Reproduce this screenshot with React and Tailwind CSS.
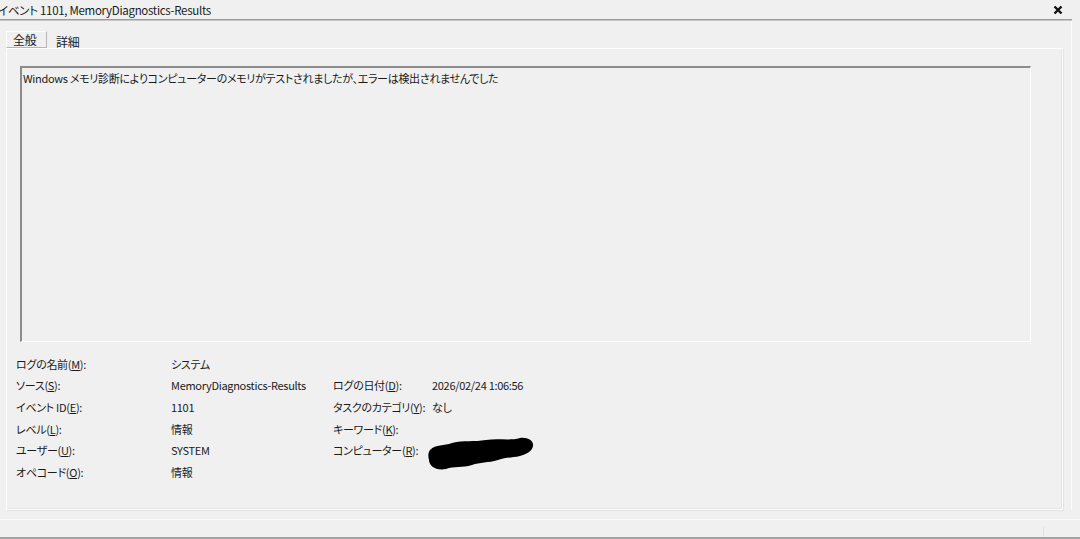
import React from 'react'

const FONT = "font-['Noto_Sans_CJK_JP','Noto_Sans',sans-serif] [font-feature-settings:'palt']"

// label with underlined access key
function Key({ pre, k, post = '):' }) {
  return (
    <span>
      {pre}(<span className="underline">{k}</span>{post}
    </span>
  )
}

function Redacted() {
  return (
    <svg width="106" height="32" viewBox="0 0 106 32" className="-my-[5px] -ml-[4px] mt-[3px] overflow-visible">
      <path
        d="M2 12 C8 6 16 8 24 5 C36 2 46 4 58 2 C70 0 82 3 92 0 C100 -1 106 3 105 8 C104 14 98 16 92 18 C84 20 78 19 70 22 C60 25 52 24 44 27 C34 30 26 28 18 31 C8 33 1 28 1 22 C0 18 0 15 2 12 Z"
        fill="#000"
      />
    </svg>
  )
}

const rows = [
  [<Key pre="ログの名前" k="M" />, 'システム', null, null],
  [<Key pre="ソース" k="S" />, 'MemoryDiagnostics-Results', <Key pre="ログの日付" k="D" />, '2026/02/24 1:06:56'],
  [<Key pre="イベント ID" k="E" />, '1101', <Key pre="タスクのカテゴリ" k="Y" />, 'なし'],
  [<Key pre="レベル" k="L" />, '情報', <Key pre="キーワード" k="K" />, null],
  [<Key pre="ユーザー" k="U" />, 'SYSTEM', <Key pre="コンピューター" k="R" />, <Redacted />],
  [<Key pre="オペコード" k="O" />, '情報', null, null],
]

export default function App() {
  return (
    <div className={`w-[1080px] h-[539px] bg-[#f0f0f0] text-[#1a1a1a] text-[11px] leading-[16px] tracking-[-0.3px] overflow-hidden flex flex-col ${FONT}`}>
      {/* Title */}
      <div className="h-[19px] flex items-center justify-between pr-[17px]">
        <span className="-ml-[2px] text-[11.5px] whitespace-nowrap">イベント 1101, MemoryDiagnostics-Results</span>
        <svg width="10" height="10" viewBox="0 0 10 10">
          <path d="M1.5 1.5 L8.5 8.5 M8.5 1.5 L1.5 8.5" stroke="#111" strokeWidth="2.4" />
        </svg>
      </div>
      <div className="h-[2px] mr-[8px] bg-[#9c9c9c] border-b border-[#c8c8c8]" />

      <div className="w-[1072px] border-r border-[#fbfbfb] flex flex-col">
        {/* Tabs */}
        <div className="mt-[10px] h-[17px] flex items-end">
          <div className="ml-[6px] w-[41px] h-[17px] border border-[#b5b5b5] border-t-[#fdfdfd] border-l-[#fdfdfd] flex items-center pl-[6px] text-[12px]">
            全般
          </div>
          <div className="ml-[9px] h-[15px] flex items-center translate-y-[1px] text-[12px]">詳細</div>
        </div>

        {/* Panel */}
        <div className="ml-[6px] w-[1057px] h-[462px] border border-white shadow-[1px_1px_0_#e2e2e2,inset_-1px_-1px_0_#e4e4e4] flex flex-col">
          <div className="ml-[13px] mt-[17px] w-[1011px] h-[276px] border-t-2 border-l-2 border-t-[#8c8c8c] border-l-[#8c8c8c] border-r border-b border-r-white border-b-white pl-[1px] pt-[2px] whitespace-nowrap">
            Windows メモリ診断によりコンピューターのメモリがテストされましたが、エラーは検出されませんでした
          </div>

          <div className="mt-[11px] pl-[9px] grid grid-cols-[155px_162px_99px_1fr] auto-rows-[21.6px] items-center whitespace-nowrap">
            {rows.map((r, i) => (
              <React.Fragment key={i}>
                <div>{r[0]}</div>
                <div>{r[1]}</div>
                <div>{r[2]}</div>
                <div className="flex items-center">{r[3]}</div>
              </React.Fragment>
            ))}
          </div>
        </div>
      </div>

      {/* Status strip */}
      <div className="flex-1 mt-[9px] border-t border-[#fafafa] border-b-2 border-b-[#a3a3a3] flex justify-end items-end">
        <div className="w-[36px] h-[10px] border-l border-[#e0e0e0] mr-[1px]" />
      </div>
    </div>
  )
}
